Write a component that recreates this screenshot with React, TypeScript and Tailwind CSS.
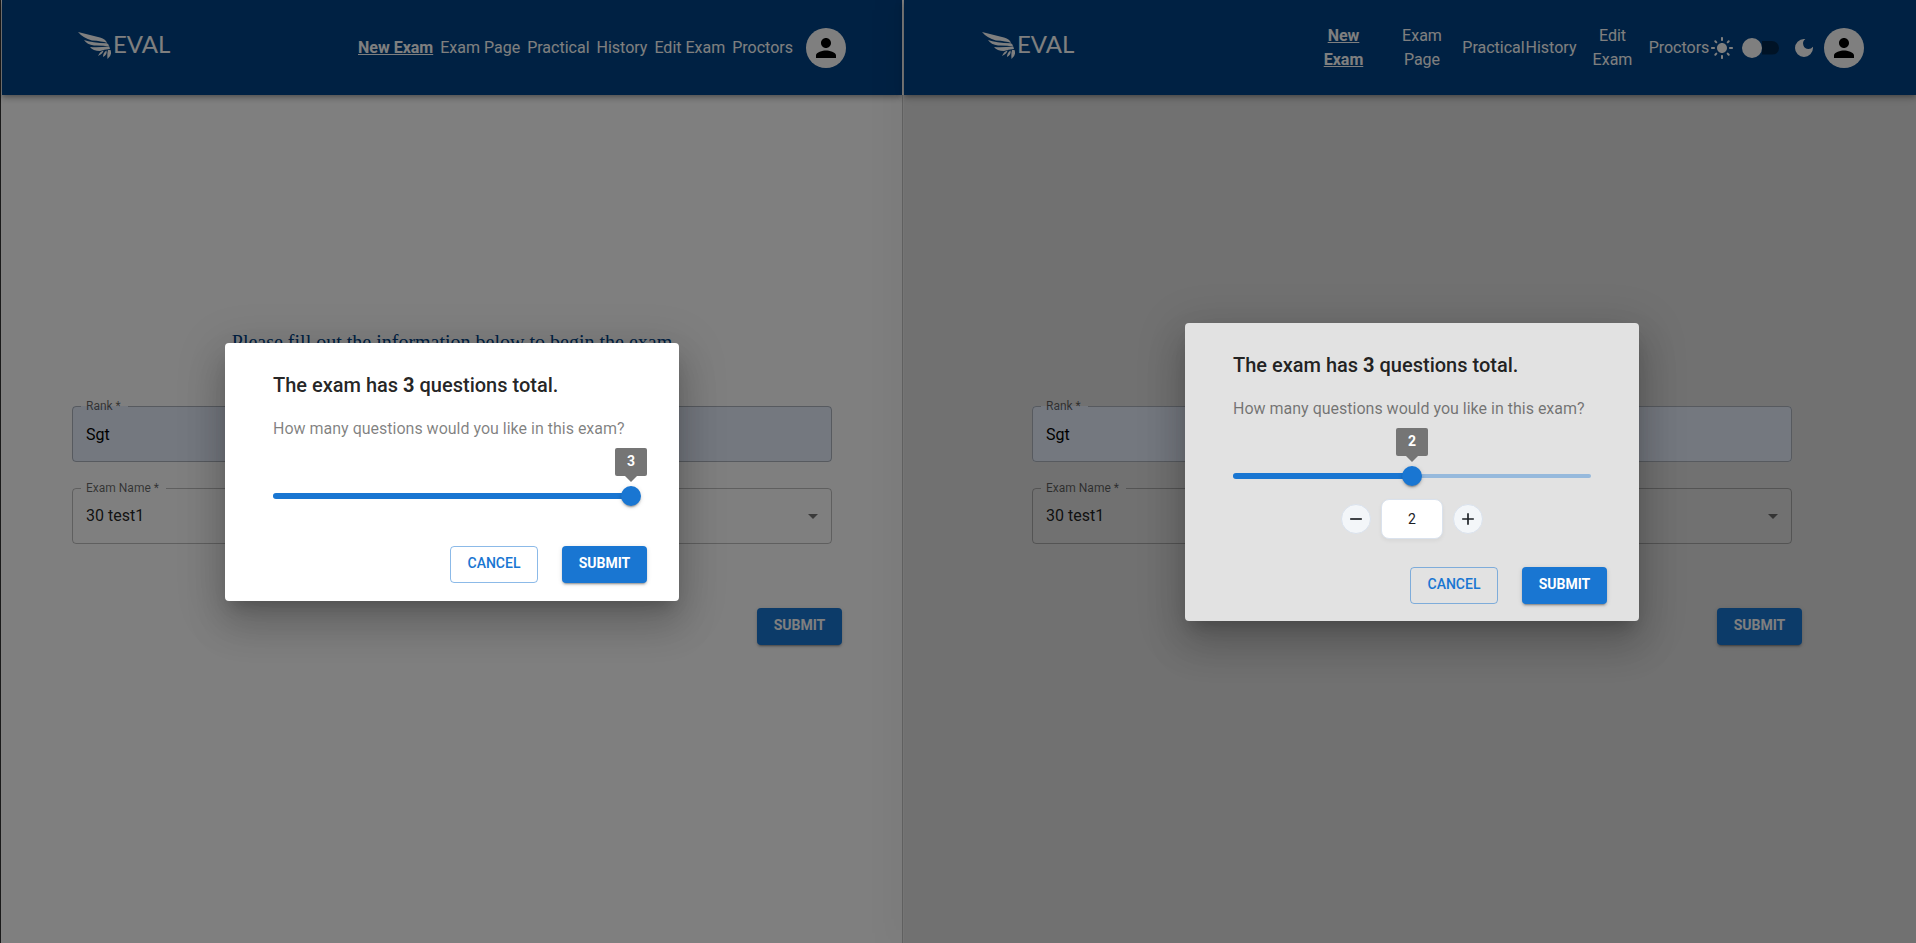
import { useId, useState } from 'react';
import type { ReactNode } from 'react';
import { MdAdd, MdArrowDropDown, MdDarkMode, MdLightMode, MdPerson, MdRemove } from 'react-icons/md';

const LINKS = [
  { label: 'New Exam', stackedWidth: 'w-[77px]' },
  { label: 'Exam Page', stackedWidth: 'w-[80px]' },
  { label: 'Practical', stackedWidth: 'w-[63px]' },
  { label: 'History', stackedWidth: 'w-[52px]' },
  { label: 'Edit Exam', stackedWidth: 'w-[71px]' },
  { label: 'Proctors', stackedWidth: 'w-[62px]' },
];

function Logo() {
  return (
    <a href="#home" className="flex items-start text-white">
      <svg viewBox="0 0 33 27" className="h-[27px] w-[33px]" fill="currentColor" aria-hidden="true">
        <path d="M0 0 L22 5.5 Q28 7 29 11 Q24 9 14 8.5 Q5 6 0 0Z" />
        <path d="M6 8 Q14 11 29 11.3 Q31 12 31 14.6 Q25 13.4 16 13.6 Q9 12.6 6 8Z" />
        <path d="M12 15 Q20 15.5 31.3 14.6 L32 17 Q26 17.6 22 19 Q15 19 12 15Z" />
        <path d="M20 24 Q22 19.5 25.5 18.6 Q25 22 20 24Z" />
        <path d="M25 25 Q25 20.5 28.5 18.4 Q29.5 22.5 25 25Z" />
        <path d="M29.5 27 Q29 21.5 30 18 L32.5 18 Q34.500 23 29.500 27Z" />
      </svg>
      <span className="pl-[2px] font-['Lato',sans-serif] text-[24px] font-normal leading-6">EVAL</span>
    </a>
  );
}

function Header({ stacked }: { stacked?: boolean }) {
  const [dark, setDark] = useState(false);
  return (
    <header
      className={`flex h-[95px] items-center justify-between bg-[#004386] text-white shadow-[0_2px_4px_-1px_rgba(0,0,0,0.2),0_4px_5px_rgba(0,0,0,0.14),0_1px_10px_rgba(0,0,0,0.12)] ${
        stacked ? 'pr-[52px] pl-[78px]' : 'pr-[56px] pl-[76px]'
      }`}
    >
      <div className="pb-1">
        <Logo />
      </div>
      <div className="flex items-center">
        <nav>
          <ul className={`flex items-center ${stacked ? '' : 'gap-[7px]'}`}>
            {LINKS.map((link, i) => (
              <li key={link.label} className={`flex justify-center ${stacked ? link.stackedWidth : ''}`}>
                <a
                  href={`#${link.label}`}
                  className={`text-center text-base leading-6 ${stacked ? 'w-min' : 'whitespace-nowrap'} ${
                    i === 0 ? 'font-bold underline' : ''
                  }`}
                >
                  {link.label}
                </a>
              </li>
            ))}
          </ul>
        </nav>
        {stacked && (
          <div className="flex items-center">
            <MdLightMode className="size-6" />
            <button
              type="button"
              role="switch"
              aria-checked={dark}
              aria-label="Dark mode"
              onClick={() => setDark(!dark)}
              className="mx-2 flex w-[38px] items-center"
            >
              <span className="size-5 shrink-0 rounded-full bg-white" />
              <span className="-ml-[17px] h-[14px] w-[34px] rounded-full bg-[#00274d] [clip-path:inset(0_0_0_17px)]" />
            </button>
            <MdDarkMode className="ml-1 size-6" />
          </div>
        )}
        <button
          type="button"
          aria-label="Account"
          className={`flex size-10 items-center justify-center rounded-full bg-white text-black ${
            stacked ? 'ml-2' : 'ml-[13px]'
          }`}
        >
          <MdPerson className="size-[30px]" />
        </button>
      </div>
    </header>
  );
}

function OutlinedField({ label, filled, children }: { label: string; filled?: boolean; children: (id: string) => ReactNode }) {
  const id = useId();
  return (
    <div className="relative">
      <div className={`overflow-hidden rounded ${filled ? 'bg-[#e8f0fe]' : ''}`}>{children(id)}</div>
      <fieldset
        aria-hidden="true"
        className="pointer-events-none absolute inset-x-0 -top-[9px] bottom-0 rounded border border-black/25 px-2"
      >
        <legend className="invisible h-[18px] px-[6px] text-xs leading-[18px]">{label}</legend>
      </fieldset>
      <label htmlFor={id} className="absolute -top-[9px] left-[14px] text-xs leading-[18px] text-black/60">
        {label}
      </label>
    </div>
  );
}

const BLUE_BUTTON =
  'h-[37px] rounded bg-[#1976d2] px-4 pb-[3px] text-sm font-bold text-white shadow-[0_3px_1px_-2px_rgba(0,0,0,0.2),0_2px_2px_rgba(0,0,0,0.14),0_1px_5px_rgba(0,0,0,0.12)] w-[85px]';

function ExamForm() {
  return (
    <main className="flex flex-1 flex-col items-center px-10 pt-[235px]">
      <h1 className="h-[76px] font-['Liberation_Serif',serif] text-[20px] leading-6 text-[#004386]">
        Please fill out the information below to begin the exam
      </h1>
      <form className="flex w-full max-w-[760px] flex-col gap-[26px]" onSubmit={(e) => e.preventDefault()}>
        <OutlinedField label="Rank *" filled>
          {(id) => (
            <input
              id={id}
              defaultValue="Sgt"
              className="block h-14 w-full bg-transparent px-[14px] text-base text-black outline-none"
            />
          )}
        </OutlinedField>
        <OutlinedField label="Exam Name *">
          {(id) => (
            <div className="flex items-center">
              <select
                id={id}
                className="block h-14 w-full appearance-none bg-transparent px-[14px] text-base text-black/87 outline-none"
              >
                <option>30 test1</option>
              </select>
              <MdArrowDropDown className="pointer-events-none -ml-[31px] mr-[7px] size-6 shrink-0 text-black/54" />
            </div>
          )}
        </OutlinedField>
        <div className="-mr-[10px] flex justify-end pt-[38px]">
          <button type="submit" className={BLUE_BUTTON}>
            SUBMIT
          </button>
        </div>
      </form>
    </main>
  );
}

function QuestionSlider({ value, onChange }: { value: number; onChange: (n: number) => void }) {
  const percent = ((value - 1) / 2) * 100;
  return (
    <div className="relative flex h-5 items-center">
      <div className="absolute inset-x-0 h-1 rounded-full bg-[#1976d2]/38" />
      <div className="absolute left-0 h-[6px] rounded-full bg-[#1976d2]" style={{ width: `${percent}%` }} />
      <input
        type="range"
        min={1}
        max={3}
        value={value}
        aria-label="Number of questions"
        onChange={(e) => onChange(Number(e.target.value))}
        className="absolute -inset-x-[10px] h-5 cursor-pointer appearance-none bg-transparent outline-none [&::-webkit-slider-thumb]:size-5 [&::-webkit-slider-thumb]:appearance-none [&::-webkit-slider-thumb]:rounded-full [&::-webkit-slider-thumb]:bg-[#1976d2] [&::-webkit-slider-thumb]:shadow-[0_3px_1px_-2px_rgba(0,0,0,0.2),0_2px_2px_rgba(0,0,0,0.14),0_1px_5px_rgba(0,0,0,0.12)]"
      />
      <output
        className="absolute bottom-[30px] flex h-7 w-8 -translate-x-1/2 items-center justify-center rounded-[2px] bg-[#757575] pb-[2px] text-sm font-bold text-white after:absolute after:top-full after:border-x-[6px] after:border-t-[6px] after:border-x-transparent after:border-t-[#757575]"
        style={{ left: `${percent}%` }}
      >
        {value}
      </output>
    </div>
  );
}

const STEP_BUTTON =
  'flex size-[30px] items-center justify-center rounded-full border border-[#dae2ed] bg-[#f3f6f9] text-[#1c2025]';

function QuestionDialog({ initial, stepper }: { initial: number; stepper?: boolean }) {
  const [value, setValue] = useState(initial);
  return (
    <div
      role="dialog"
      aria-label="Question count"
      className={`w-[454px] rounded px-12 pt-[26px] shadow-[0_11px_15px_-7px_rgba(0,0,0,0.2),0_24px_38px_3px_rgba(0,0,0,0.14),0_9px_46px_8px_rgba(0,0,0,0.12)] ${
        stepper ? 'bg-[#e2e2e2] pb-[17px]' : 'bg-white pb-[18px]'
      }`}
    >
      <h2 className="text-xl leading-8 font-medium text-black/87">
        The exam has <b>{3}</b> questions total.
      </h2>
      <p className="mt-4 text-base leading-6 text-black/50">How many questions would you like in this exam?</p>
      <div className="pt-[45px]">
        <QuestionSlider value={value} onChange={setValue} />
      </div>
      {stepper && (
        <div className="mt-[13px] flex items-center justify-center gap-[10px]">
          <button type="button" aria-label="Decrease" className={STEP_BUTTON} onClick={() => setValue(Math.max(1, value - 1))}>
            <MdRemove className="size-5 shrink-0" />
          </button>
          <input
            aria-label="Questions"
            value={value}
            readOnly
            className="h-10 w-[62px] rounded-lg border border-[#dae2ed] bg-white text-center text-sm text-[#1c2025] shadow-[0_2px_4px_rgba(0,0,0,0.05)] outline-none"
          />
          <button type="button" aria-label="Increase" className={STEP_BUTTON} onClick={() => setValue(Math.min(3, value + 1))}>
            <MdAdd className="size-5 shrink-0" />
          </button>
        </div>
      )}
      <div className={`-mr-4 flex justify-end gap-6 ${stepper ? 'mt-7' : 'mt-10'}`}>
        <button
          type="button"
          className="h-[37px] w-[88px] rounded border border-[#1976d2]/50 pb-[3px] text-sm font-medium text-[#1976d2]"
        >
          CANCEL
        </button>
        <button type="button" className={BLUE_BUTTON}>
          SUBMIT
        </button>
      </div>
    </div>
  );
}

export default function App() {
  return (
    <div className="flex min-h-screen bg-[#808080] pl-[2px] font-['Roboto',sans-serif] shadow-[inset_1px_0_0_#1a1a1a]">
      <section className="relative flex flex-[900] flex-col bg-white">
        <Header />
        <ExamForm />
        <div className="absolute inset-0 flex items-center justify-center bg-black/50 pt-px">
          <QuestionDialog initial={3} />
        </div>
      </section>
      <div className="relative flex w-[2px] flex-col shadow-[0_0_30px_rgba(0,0,0,0.45)]">
        <div className="h-[95px] bg-[#808080]" />
        <div className="flex-1 border-l border-[#606060] bg-[#757575]" />
      </div>
      <section className="relative flex flex-[1012] flex-col bg-[#e2e2e2]">
        <Header stacked />
        <div className="flex flex-1 flex-col pl-1">
          <ExamForm />
        </div>
        <div className="absolute inset-0 flex items-center justify-center bg-black/50 pt-px pl-1">
          <QuestionDialog initial={2} stepper />
        </div>
      </section>
    </div>
  );
}
